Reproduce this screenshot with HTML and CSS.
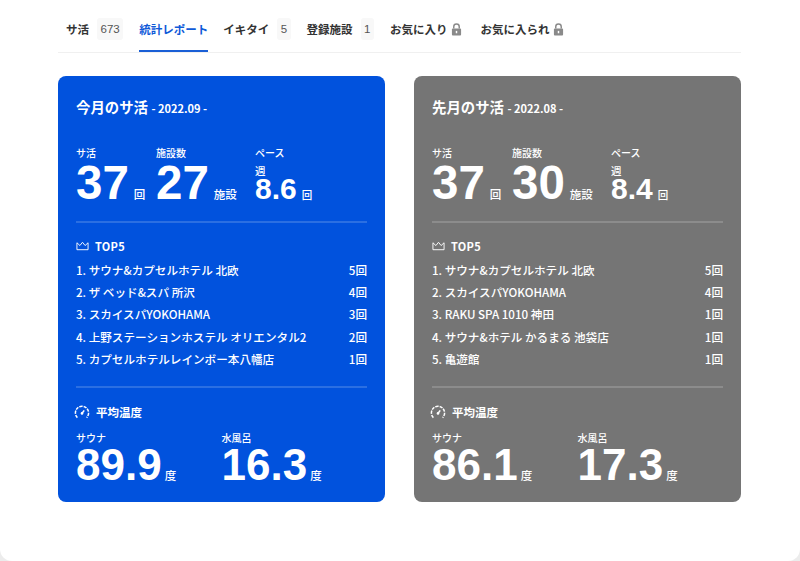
FILE: index.html
```html
<!DOCTYPE html>
<html lang="ja">
<head>
<meta charset="utf-8">
<title>統計レポート</title>
<link rel="stylesheet" href="styles.css">
</head>
<body>
<div class="page">
  <nav class="tabs">
    <a class="tab">サ活<span class="count">673</span></a>
    <a class="tab active">統計レポート</a>
    <a class="tab">イキタイ<span class="count">5</span></a>
    <a class="tab">登録施設<span class="count">1</span></a>
    <a class="tab">お気に入り<svg class="lock" viewBox="0 0 12 14"><path d="M3 6V4a3 3 0 0 1 6 0v2" fill="none" stroke="#8a8a8a" stroke-width="1.6"/><rect x="1" y="6" width="10" height="7.5" rx="1" fill="#8a8a8a"/><rect x="5.2" y="8.5" width="1.6" height="2.6" fill="#fff"/></svg></a>
    <a class="tab">お気に入られ<svg class="lock" viewBox="0 0 12 14"><path d="M3 6V4a3 3 0 0 1 6 0v2" fill="none" stroke="#8a8a8a" stroke-width="1.6"/><rect x="1" y="6" width="10" height="7.5" rx="1" fill="#8a8a8a"/><rect x="5.2" y="8.5" width="1.6" height="2.6" fill="#fff"/></svg></a>
  </nav>
  <div class="cards">
    <section class="card blue">
      <h2 class="title">今月のサ活<small> - 2022.09 -</small></h2>
      <div class="stats">
        <div class="stat s1"><div class="label">サ活</div><div class="value"><b>37</b><i>回</i></div></div>
        <div class="stat s2"><div class="label">施設数</div><div class="value"><b>27</b><i>施設</i></div></div>
        <div class="stat s3"><div class="label">ペース</div><div class="week">週</div><div class="value pace"><b>8.6</b><i>回</i></div></div>
      </div>
      <hr class="rule">
      <h3 class="head"><svg class="crown" viewBox="0 0 14 10"><path d="M1 1.5l3.2 3L7 1l2.8 3.5L13 1.5V9H1z" fill="none" stroke="#fff" stroke-width="1"/></svg>TOP5</h3>
      <ol class="rank">
        <li><span>1. サウナ&amp;カプセルホテル 北欧</span><span>5回</span></li>
        <li><span>2. ザ ベッド&amp;スパ 所沢</span><span>4回</span></li>
        <li><span>3. スカイスパYOKOHAMA</span><span>3回</span></li>
        <li><span>4. 上野ステーションホステル オリエンタル2</span><span>2回</span></li>
        <li><span>5. カプセルホテルレインボー本八幡店</span><span>1回</span></li>
      </ol>
      <hr class="rule">
      <h3 class="head temp"><svg class="gauge" viewBox="0 0 16 16"><path d="M3.4 13.6a6.6 6.6 0 1 1 9.2 0" fill="none" stroke="#fff" stroke-width="1.5" stroke-dasharray="3.2 1"/><path d="M8 9.4l2.2-3" stroke="#fff" stroke-width="1.6"/><circle cx="8" cy="9.4" r="1.3" fill="#fff"/></svg>平均温度</h3>
      <div class="temps">
        <div class="tcol"><div class="label">サウナ</div><div class="value"><b>89.9</b><i>度</i></div></div>
        <div class="tcol"><div class="label">水風呂</div><div class="value"><b>16.3</b><i>度</i></div></div>
      </div>
    </section>
    <section class="card gray">
      <h2 class="title">先月のサ活<small> - 2022.08 -</small></h2>
      <div class="stats">
        <div class="stat s1"><div class="label">サ活</div><div class="value"><b>37</b><i>回</i></div></div>
        <div class="stat s2"><div class="label">施設数</div><div class="value"><b>30</b><i>施設</i></div></div>
        <div class="stat s3"><div class="label">ペース</div><div class="week">週</div><div class="value pace"><b>8.4</b><i>回</i></div></div>
      </div>
      <hr class="rule">
      <h3 class="head"><svg class="crown" viewBox="0 0 14 10"><path d="M1 1.5l3.2 3L7 1l2.8 3.5L13 1.5V9H1z" fill="none" stroke="#fff" stroke-width="1"/></svg>TOP5</h3>
      <ol class="rank">
        <li><span>1. サウナ&amp;カプセルホテル 北欧</span><span>5回</span></li>
        <li><span>2. スカイスパYOKOHAMA</span><span>4回</span></li>
        <li><span>3. RAKU SPA 1010 神田</span><span>1回</span></li>
        <li><span>4. サウナ&amp;ホテル かるまる 池袋店</span><span>1回</span></li>
        <li><span>5. 亀遊館</span><span>1回</span></li>
      </ol>
      <hr class="rule">
      <h3 class="head temp"><svg class="gauge" viewBox="0 0 16 16"><path d="M3.4 13.6a6.6 6.6 0 1 1 9.2 0" fill="none" stroke="#fff" stroke-width="1.5" stroke-dasharray="3.2 1"/><path d="M8 9.4l2.2-3" stroke="#fff" stroke-width="1.6"/><circle cx="8" cy="9.4" r="1.3" fill="#fff"/></svg>平均温度</h3>
      <div class="temps">
        <div class="tcol"><div class="label">サウナ</div><div class="value"><b>86.1</b><i>度</i></div></div>
        <div class="tcol"><div class="label">水風呂</div><div class="value"><b>17.3</b><i>度</i></div></div>
      </div>
    </section>
  </div>
</div>
</body>
</html>
```
FILE: styles.css
```css
* { box-sizing: border-box; }
html { background: #ececec; }
body { margin: 0; }
.page {
  height: 561px;
  background: #fff;
  border-radius: 0 0 12px 12px;
  padding: 0 59px 0 58px;
  overflow: hidden;
  font-family: "Noto Sans CJK JP", "Noto Sans", sans-serif;
  color: #fff;
}
.tabs {
  display: flex;
  height: 53px;
  padding-left: 8px;
  gap: 15px;
  border-bottom: 1px solid #f0f0f0;
}
.tab {
  display: flex;
  align-items: center;
  height: 52px;
  color: #333;
  font-size: 11.5px;
  font-weight: 700;
  padding-top: 6px;
  white-space: nowrap;
}
.tab.active {
  color: #0f5ad8;
  border-bottom: 2px solid #1a5fd6;
  padding-top: 8px;
}
.count {
  display: inline-block;
  margin: 0 1px 0 8px;
  padding: 3px 3.5px;
  font-family: "Liberation Sans", sans-serif;
  font-size: 11.5px;
  font-weight: 400;
  line-height: 16px;
  color: #555;
  background: #f8f8f8;
  border-radius: 3px;
}
.lock { width: 11px; height: 13px; margin: 0 4px 0 3px; }
.cards {
  display: flex;
  gap: 29px;
  margin-top: 23px;
}
.card {
  width: 327px;
  height: 426px;
  border-radius: 8px;
  padding: 20px 18px 0 18px;
}
.blue { background: #0152dd; }
.gray { background: #757575; }
.title {
  margin: 0;
  font-size: 14.4px;
  font-weight: 700;
  line-height: 21px;
}
.title small { font-size: 11px; font-weight: 700; margin-left: 1px; }
.stats { display: flex; margin-top: 27px; height: 65px; }
.s1 { width: 80px; }
.s2 { width: 99px; }
.label { font-size: 10px; font-weight: 500; line-height: 14px; }
.week { font-size: 10.5px; font-weight: 500; line-height: 12px; margin-top: 5px; margin-bottom: -3px; }
.value { display: flex; align-items: baseline; white-space: nowrap; }
.value b {
  font-family: "Liberation Sans", sans-serif;
  font-size: 47.5px;
  font-weight: 700;
  line-height: 46px;
}
.value i { font-style: normal; font-size: 11.5px; font-weight: 500; margin-left: 5px; }
.pace b { font-size: 30px; line-height: 30px; }
.pace i { font-size: 10.5px; margin-left: 5px; }
.rule {
  border: 0;
  height: 2px;
  margin: 0;
  background: rgba(255, 255, 255, .17);
}
.stats + .rule { margin-top: 10px; }
.head {
  display: flex;
  align-items: center;
  margin: 15px 0 0;
  font-size: 11px;
  font-weight: 700;
  line-height: 16px;
  letter-spacing: .3px;
}
.crown { width: 13px; height: 10px; margin-right: 6px; }
.rank { list-style: none; margin: 5px 0 0; padding: 0; }
.rank li {
  display: flex;
  justify-content: space-between;
  font-size: 11.6px;
  font-weight: 500;
  line-height: 22.2px;
  height: 22.2px;
}
.rank + .rule { margin-top: 16px; }
.temp { margin-top: 16px; margin-left: -2px; font-size: 11.5px; letter-spacing: 0; }
.gauge { width: 16px; height: 16px; margin-right: 6px; }
.temps { display: flex; margin-top: 11px; }
.tcol { width: 146px; }
.tcol b { font-size: 44px; line-height: 40px; }
.tcol i { margin-left: 3px; }
```
